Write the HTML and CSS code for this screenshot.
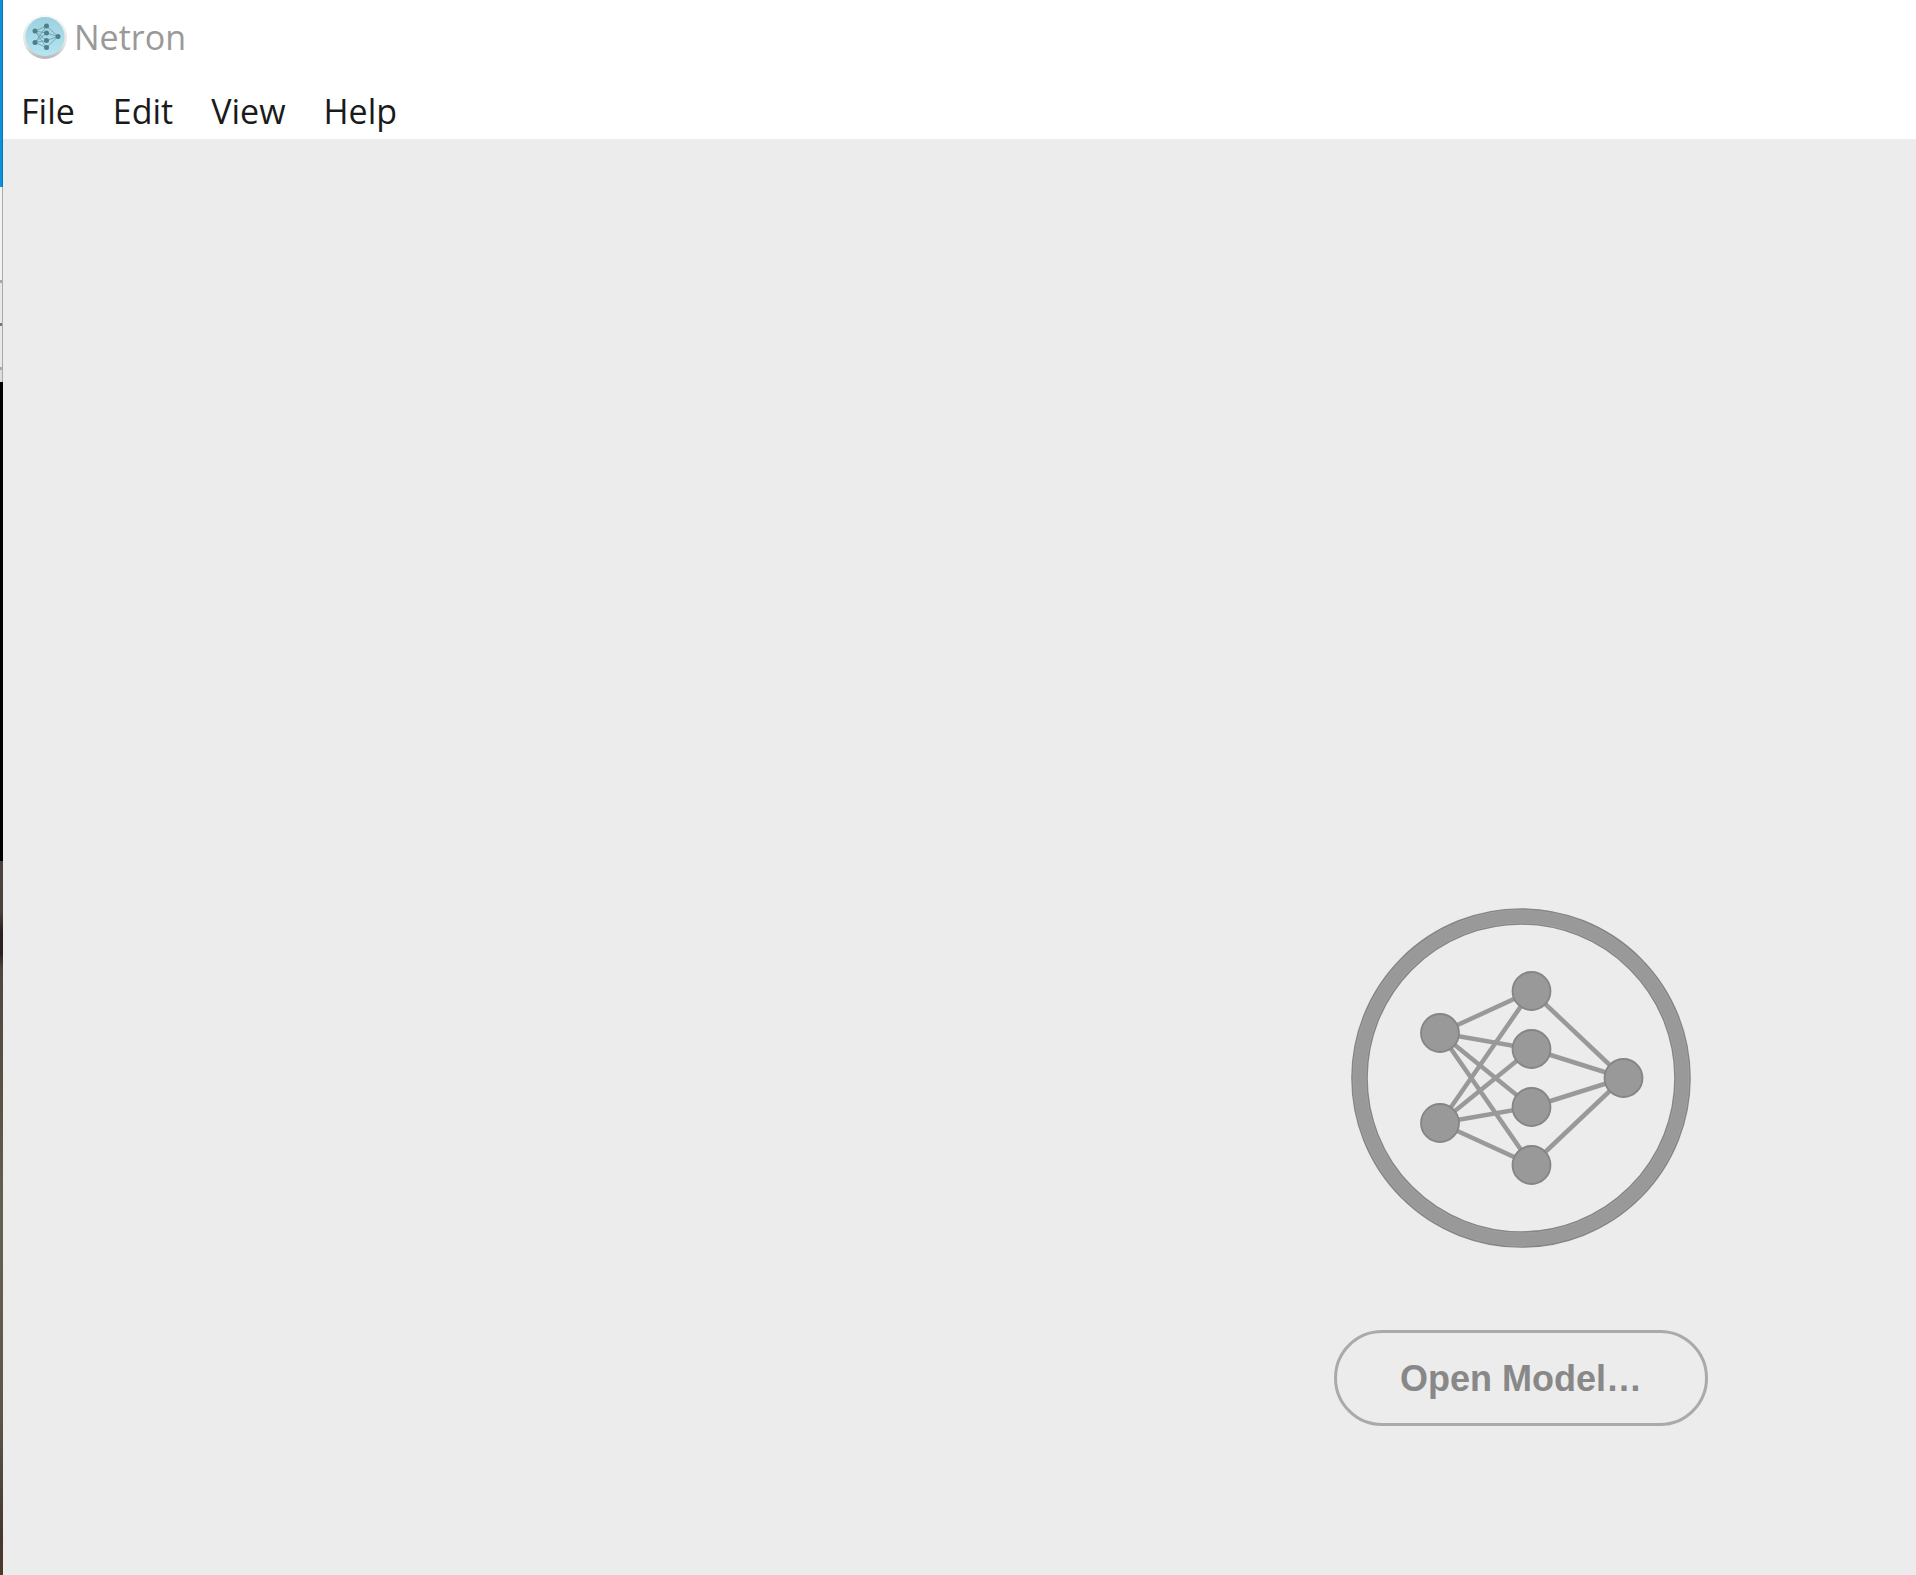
FILE: index.html
```html
<!DOCTYPE html>
<html lang="en">
<head>
    <meta charset="UTF-8">
    <meta name="viewport" content="width=device-width, initial-scale=1.0">
    <title>Netron</title>
    <link rel="stylesheet" href="styles.css">
</head>
<body>
    <div class="desktop">
        <div class="desktop-blue"></div>
        <div class="desktop-panel"></div>
        <div class="desktop-black"></div>
        <div class="desktop-photo"></div>
    </div>
    <div class="window">
        <header class="titlebar">
            <svg class="app-icon" viewBox="0 0 44 44" aria-hidden="true">
                <defs>
                    <linearGradient id="rim" x1="0" y1="0" x2="0" y2="1">
                        <stop offset="0" stop-color="#f8f8f8"/>
                        <stop offset="0.7" stop-color="#e2e2e2"/>
                        <stop offset="1" stop-color="#b4b4b4"/>
                    </linearGradient>
                    <linearGradient id="face" x1="0" y1="0" x2="0" y2="1">
                        <stop offset="0" stop-color="#9dd0df"/>
                        <stop offset="1" stop-color="#b5e5f2"/>
                    </linearGradient>
                </defs>
                <circle cx="22" cy="22" r="22" fill="url(#rim)"/>
                <circle cx="22" cy="21.500" r="19.500" fill="url(#face)"/>
                <path d="M12 16 23.500 11M12 16 23.500 18M12 16 23.500 25.500M12 16 23.500 32.500M12 27.500 23.500 11M12 27.500 23.500 18M12 27.500 23.500 25.500M12 27.500 23.500 32.500M23.500 11 35 21.500M23.500 18 35 21.500M23.500 25.500 35 21.500M23.500 32.500 35 21.500" stroke="#558490" stroke-width="0.6"/>
                <g fill="#4e808b">
                    <circle cx="12" cy="16" r="2.500"/>
                    <circle cx="12" cy="27.500" r="2.500"/>
                    <circle cx="23.500" cy="11" r="2.500"/>
                    <circle cx="23.500" cy="18" r="2.500"/>
                    <circle cx="23.500" cy="25.500" r="2.500"/>
                    <circle cx="23.500" cy="32.500" r="2.500"/>
                    <circle cx="35" cy="21.500" r="2.500"/>
                </g>
            </svg>
            <span class="title">Netron</span>
        </header>
        <nav class="menubar">
            <button type="button">File</button>
            <button type="button">Edit</button>
            <button type="button">View</button>
            <button type="button">Help</button>
        </nav>
        <main class="workspace">
            <div class="welcome">
                <svg class="logo" viewBox="0 0 342 342" role="img" aria-label="Netron logo">
                    <circle cx="171" cy="171" r="161.500" fill="none" stroke="#858585" stroke-width="16.600"/>
                    <circle cx="171" cy="171" r="161.500" fill="none" stroke="#a3a3a3" stroke-width="13.800"/>
                    <circle cx="171" cy="171" r="161.500" fill="none" stroke="#999" stroke-width="12.400"/>
                    <path d="M90 126 181.500 84M90 126 181.500 142M90 126 181.500 200M90 126 181.500 258M90 216 181.500 84M90 216 181.500 142M90 216 181.500 200M90 216 181.500 258M181.500 84 273.500 171M181.500 142 273.500 171M181.500 200 273.500 171M181.500 258 273.500 171" stroke="#999" stroke-width="4.500"/>
                    <g fill="#999" stroke="#858585" stroke-width="1.800">
                        <circle cx="90" cy="126" r="19"/>
                        <circle cx="90" cy="216" r="19"/>
                        <circle cx="181.500" cy="84" r="19"/>
                        <circle cx="181.500" cy="142" r="19"/>
                        <circle cx="181.500" cy="200" r="19"/>
                        <circle cx="181.500" cy="258" r="19"/>
                        <circle cx="273.500" cy="171" r="19"/>
                    </g>
                </svg>
                <button type="button" class="open-button">Open Model…</button>
            </div>
        </main>
    </div>
</body>
</html>
```
FILE: styles.css
```css
*{
    margin:0;
    padding:0;
    box-sizing:border-box;
}
body{
    display:flex;
    min-height:100vh;
    background-color:#ececec;
    font-family:"Open Sans", "Noto Sans", sans-serif;
}

/* strip of the desktop left of the window */
.desktop{
    display:flex;
    flex-direction:column;
    width:3px;
    flex-shrink:0;
}
.desktop-blue{
    height:187px;
    background-color:#0a93dc;
    border-right:1px solid #0878b4;
}
.desktop-panel{
    height:195px;
    background:linear-gradient(#f2f2f2 93px, #a8a8a8 93px, #a8a8a8 96px, #e8e8e8 96px, #e8e8e8 136px, #777 136px, #777 139px, #e8e8e8 139px, #e8e8e8 180px, #a8a8a8 180px, #a8a8a8 183px, #ddd 183px);
    border-right:1px solid #aaa;
}
.desktop-black{
    height:479px;
    background-color:#000;
}
.desktop-photo{
    flex:1;
    background:linear-gradient(#4d423f, #4a403c 7%, #2c2020 10%, #2c2020 13%, #4f473f 15%, #5a5446 35%, #656152 50%, #5c5648 78%, #45372f 95%, #50392f);
}

.window{
    flex:1;
    display:flex;
    flex-direction:column;
    min-width:0;
}
.titlebar{
    display:flex;
    align-items:center;
    gap:7px;
    height:74px;
    padding-left:20px;
    background-color:#fff;
}
.app-icon{
    width:44px;
    height:44px;
}
.title{
    font-size:34px;
    line-height:48px;
    color:#999;
}
.menubar{
    display:flex;
    gap:38px;
    height:65px;
    padding:8px 18px 0;
    background-color:#fff;
}
.menubar button{
    border:none;
    background:none;
    font-family:inherit;
    font-size:34px;
    line-height:48px;
    color:#1a1a1a;
}
.workspace{
    flex:1;
    display:grid;
    grid-template-columns:27fr 19fr;
    align-content:end;
    padding-bottom:149px;
    background-color:#ececec;
}
.welcome{
    grid-column:2;
    display:flex;
    flex-direction:column;
    align-items:center;
    gap:81px;
}
.logo{
    width:342px;
    height:342px;
}
.open-button{
    width:374px;
    height:96px;
    padding-top:2px;
    border:3px solid #aaa;
    border-radius:48px;
    background:none;
    font-family:"Liberation Sans", Arial, sans-serif;
    font-size:36px;
    font-weight:bold;
    color:#888;
}
```
